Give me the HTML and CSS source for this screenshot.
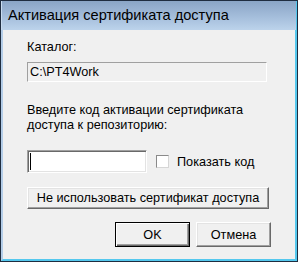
FILE: index.html
```html
<!DOCTYPE html>
<html lang="ru">
<head>
    <meta charset="UTF-8">
    <title>Активация сертификата доступа</title>
    <link rel="stylesheet" href="styles.css">
</head>
<body>
    <div class="window">
        <div class="titlebar">Активация сертификата доступа</div>
        <div class="frame">
            <div class="content">
                <div class="label">Каталог:</div>
                <div class="field-disabled">C:\PT4Work</div>
                <div class="label label-code">Введите код активации сертификата<br>доступа к репозиторию:</div>
                <div class="code-row">
                    <div class="code-input"><span class="caret"></span></div>
                    <span class="checkbox"></span>
                    <span class="check-label">Показать код</span>
                </div>
                <button class="btn btn-wide">Не использовать сертификат доступа</button>
                <div class="actions">
                    <button class="btn btn-default">OK</button>
                    <button class="btn btn-cancel">Отмена</button>
                </div>
            </div>
        </div>
    </div>
</body>
</html>
```

FILE: styles.css
```css
body {
    margin: 0;
    background: #ffffff;
    font-family: "Liberation Sans", Arial, sans-serif;
    font-size: 12.7px;
    color: #000000;
}
.window {
    width: 298px;
    height: 262px;
    box-sizing: border-box;
    border: 1px solid #1f2d40;
    display: flex;
    flex-direction: column;
}
.titlebar {
    height: 29px;
    flex: none;
    box-sizing: border-box;
    padding: 5px 0 0 6px;
    font-size: 14.6px;
    line-height: 18px;
    color: #000000;
    background: linear-gradient(to bottom, #8aa5c6 0%, #a7c0dd 60%, #bcd3eb 100%);
    border-left: 1px solid #c9dcf0;
    border-right: 1px solid #54c8ee;
}
.frame {
    flex: 1;
    border-left: 2px solid #b4cde8;
    border-right: 2px solid #54c8ee;
    border-bottom: 2px solid #54c8ee;
    background: #f0f0f0;
}
.content {
    padding: 10px 0 0 24px;
}
.label {
    line-height: 15px;
}
.field-disabled {
    margin-top: 7px;
    width: 240px;
    height: 20px;
    box-sizing: border-box;
    padding-left: 2px;
    line-height: 18px;
    border-top: 1px solid #a0a0a0;
    border-left: 1px solid #a0a0a0;
    border-bottom: 1px solid #ffffff;
    border-right: 1px solid #ffffff;
}
.label-code {
    margin-top: 21px;
}
.code-row {
    margin-top: 17px;
    display: flex;
    align-items: center;
}
.code-input {
    width: 120px;
    height: 23px;
    box-sizing: border-box;
    background: #ffffff;
    border-top: 1px solid #a0a0a0;
    border-left: 1px solid #a0a0a0;
    border-bottom: 1px solid #ffffff;
    border-right: 1px solid #ffffff;
    box-shadow: inset 1px 1px #696969, inset -1px -1px #e3e3e3;
    padding: 2px 0 0 2px;
}
.caret {
    display: block;
    width: 1px;
    height: 17px;
    background: #000000;
}
.checkbox {
    width: 13px;
    height: 13px;
    box-sizing: border-box;
    margin-left: 9px;
    margin-top: -1px;
    background: #ffffff;
    border-top: 1px solid #8a8a8a;
    border-left: 1px solid #8a8a8a;
    border-bottom: 1px solid #d6d6d6;
    border-right: 1px solid #d6d6d6;
}
.check-label {
    margin-left: 8px;
}
.btn {
    display: block;
    font-family: "Liberation Sans", Arial, sans-serif;
    font-size: 12.7px;
    color: #000000;
    background: #f0f0f0;
    box-sizing: border-box;
    padding: 0;
    border-top: 1px solid #ffffff;
    border-left: 1px solid #ffffff;
    border-bottom: 1px solid #696969;
    border-right: 1px solid #696969;
    box-shadow: inset -1px -1px #a0a0a0, inset 1px 1px #e3e3e3;
}
.btn-wide {
    margin-top: 14px;
    width: 242px;
    height: 22px;
}
.actions {
    margin-top: 13px;
    display: flex;
    gap: 6px;
    margin-left: 88px;
}
.actions .btn {
    width: 75px;
    height: 25px;
}
.btn-default {
    border: 1px solid #000000;
    box-shadow: inset 1px 1px #ffffff, inset -1px -1px #696969, inset -2px -2px #a0a0a0;
}
```
